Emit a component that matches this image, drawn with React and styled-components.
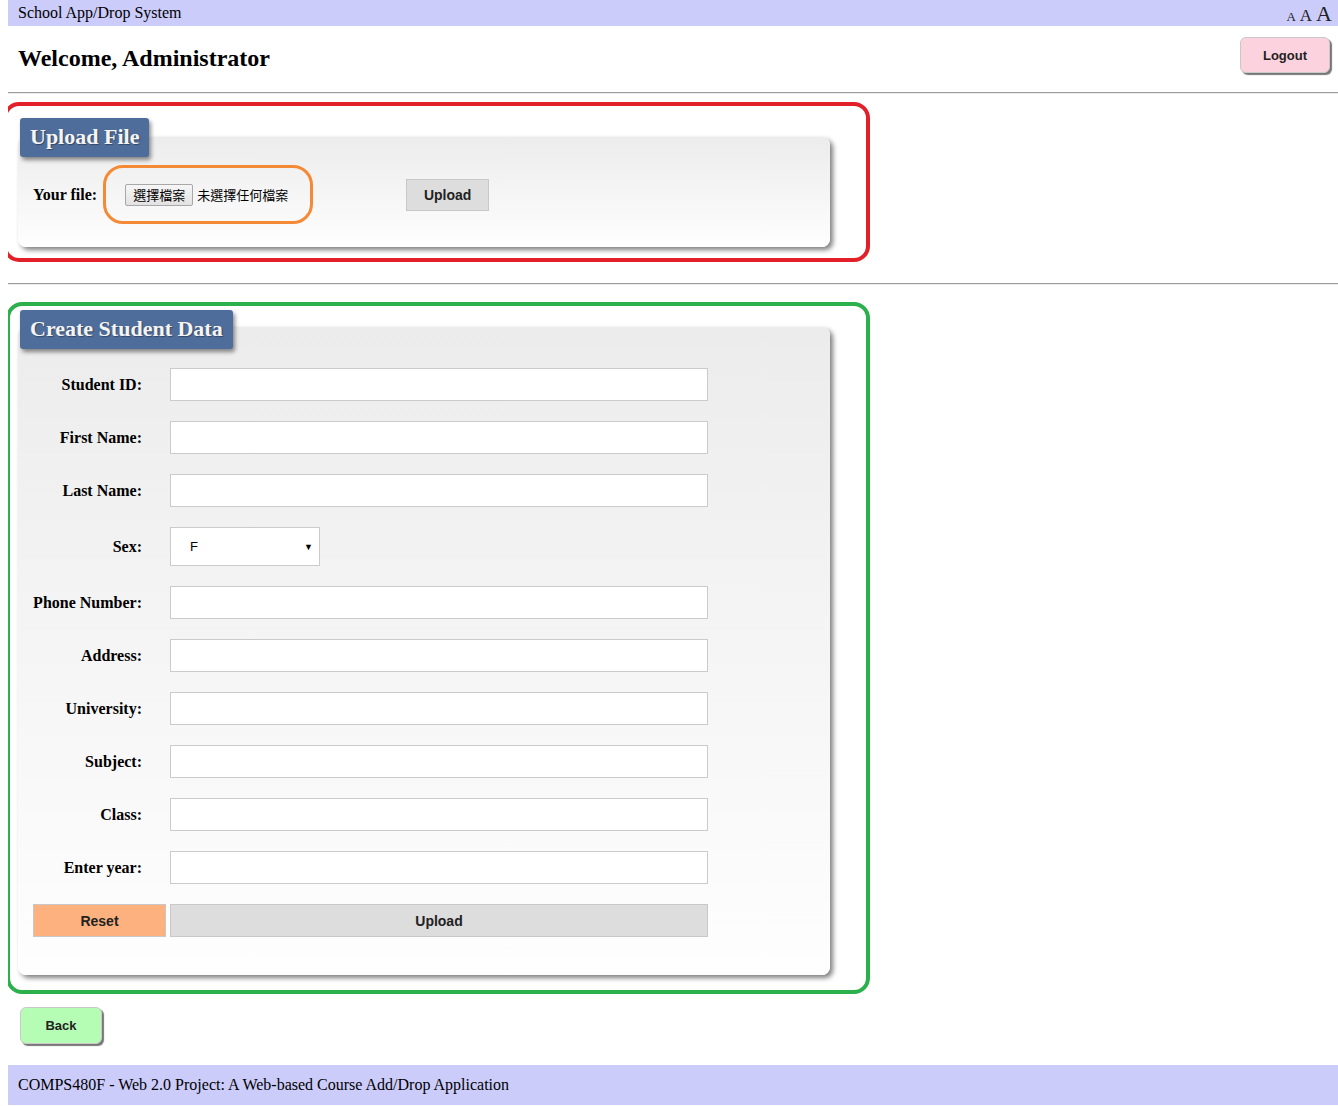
import React from "react";
import styled, { createGlobalStyle } from "styled-components";

const GlobalStyle = createGlobalStyle`
	body {
		margin: 0 0 0 8px;
		background: #fff;
		font-family: "Liberation Serif", "Times New Roman", serif;
		color: #000;
	}
`;

const TopBar = styled.div`
	height: 26px;
	background: #ccccfb;
	display: flex;
	align-items: center;
	justify-content: space-between;
	padding: 0 6px 0 10px;
	font-size: 16px;
`;

const SizeSwitch = styled.div`
	display: flex;
	align-items: baseline;
	gap: 4px;
	padding-top: 2px;
`;

const SizeLetter = styled.span`
	font-size: ${(p) => p.size}px;
	line-height: 1;
	color: #222;
`;

const HeaderRow = styled.div`
	display: flex;
	justify-content: space-between;
	align-items: flex-start;
	padding: 11px 8px 0 10px;
`;

const Welcome = styled.h1`
	margin: 7px 0 0;
	font-size: 24px;
	line-height: 28px;
	font-weight: bold;
`;

const RaisedButton = styled.button`
	width: ${(p) => p.w}px;
	height: ${(p) => p.h}px;
	background: ${(p) => p.bg};
	border: 1px solid #c9c9c9;
	border-radius: 6px;
	box-shadow: 2px 2px 1px #777;
	font-family: "Liberation Sans", Arial, sans-serif;
	font-weight: bold;
	font-size: 13px;
	color: #222;
	cursor: pointer;
`;

const Divider = styled.div`
	margin-top: ${(p) => p.top}px;
	border-top: 1px solid #9c9c9c;
	border-bottom: 1px solid #ececec;
`;

const Annotation = styled.div`
	box-sizing: border-box;
	width: ${(p) => p.w}px;
	margin-top: ${(p) => p.top}px;
	margin-left: ${(p) => p.shift}px;
	border: 4px solid ${(p) => p.color};
	border-radius: 16px;
	padding: ${(p) => p.pad};
`;

const TitleTab = styled.div`
	position: relative;
	z-index: 1;
	display: block;
	width: fit-content;
	margin: 0 0 -${(p) => p.overlap}px 2px;
	height: 39px;
	box-sizing: border-box;
	padding: 5px 10px 0;
	background: #4f6d9b;
	color: #f4f4f4;
	font-size: 22px;
	font-weight: bold;
	line-height: 28px;
	border-radius: 3px;
	box-shadow: 2px 3px 4px rgba(0, 0, 0, 0.45);
	text-shadow: 1px 1px 1px rgba(0, 0, 0, 0.35);
`;

const Panel = styled.div`
	width: 812px;
	box-sizing: border-box;
	padding: ${(p) => p.pad};
	border-radius: 8px;
	background: linear-gradient(to bottom, #ececec, #fefefe);
	box-shadow: 3px 3px 5px rgba(0, 0, 0, 0.5);
`;

const FileRow = styled.div`
	display: flex;
	align-items: center;
`;

const FieldLabel = styled.label`
	font-size: 16px;
	font-weight: bold;
	text-align: right;
`;

const Highlight = styled.div`
	box-sizing: border-box;
	width: 210px;
	height: 59px;
	margin-left: 6px;
	border: 3px solid #f58a36;
	border-radius: 20px;
	display: flex;
	align-items: center;
	padding-left: 19px;
	gap: 4px;
	font-family: "Noto Sans CJK TC", sans-serif;
	font-size: 13px;
`;

const ChooseButton = styled.span`
	height: 22px;
	box-sizing: border-box;
	padding: 0 7px;
	display: flex;
	align-items: center;
	background: linear-gradient(to bottom, #f6f6f6, #e2e2e2);
	border: 1px solid #a8a8a8;
	border-radius: 2px;
`;

const FlatButton = styled.button`
	width: ${(p) => p.w}px;
	height: ${(p) => p.h}px;
	margin-left: ${(p) => p.ml || 0}px;
	background: ${(p) => p.bg};
	border: 1px solid #c8c8c8;
	font-family: "Liberation Sans", Arial, sans-serif;
	font-weight: bold;
	font-size: 14px;
	color: #222;
	cursor: pointer;
`;

const FormGrid = styled.div`
	display: grid;
	grid-template-columns: 109px 538px;
	column-gap: 28px;
	row-gap: 20px;
	align-items: center;
`;

const TextInput = styled.input`
	box-sizing: border-box;
	height: 33px;
	border: 1px solid #cbcbcb;
	background: #fff;
	outline: none;
`;

const SelectBox = styled.div`
	box-sizing: border-box;
	width: 150px;
	height: 39px;
	border: 1px solid #cbcbcb;
	background: #fff;
	display: flex;
	align-items: center;
	justify-content: space-between;
	padding: 0 6px 0 19px;
	font-family: "Liberation Sans", Arial, sans-serif;
	font-size: 13px;
`;

const Caret = styled.span`
	font-size: 9px;
`;

const ButtonRow = styled.div`
	display: flex;
	gap: 4px;
	margin-top: 20px;
`;

const BackWrap = styled.div`
	margin: 13px 0 0 12px;
`;

const Footer = styled.div`
	margin-top: 21px;
	height: 40px;
	background: #ccccfb;
	display: flex;
	align-items: center;
	padding-left: 10px;
	font-size: 16px;
`;

const fields = [
	"Student ID:",
	"First Name:",
	"Last Name:",
	"Sex:",
	"Phone Number:",
	"Address:",
	"University:",
	"Subject:",
	"Class:",
	"Enter year:",
];

export default function App() {
	return (
		<>
			<GlobalStyle />
			<TopBar>
				<span>School App/Drop System</span>
				<SizeSwitch>
					<SizeLetter size={13}>A</SizeLetter>
					<SizeLetter size={17}>A</SizeLetter>
					<SizeLetter size={22}>A</SizeLetter>
				</SizeSwitch>
			</TopBar>

			<HeaderRow>
				<Welcome>Welcome, Administrator</Welcome>
				<RaisedButton w={90} h={36} bg="#fdd2df">
					Logout
				</RaisedButton>
			</HeaderRow>
			<Divider top={19} />

			<Annotation color="#e3202a" w={867} top={8} shift={-5} pad="12px 36px 11px 11px">
				<TitleTab overlap={20}>Upload File</TitleTab>
				<Panel pad="28px 15px 23px">
					<FileRow>
						<FieldLabel>Your file:</FieldLabel>
						<Highlight>
							<ChooseButton>選擇檔案</ChooseButton>
							<span>未選擇任何檔案</span>
						</Highlight>
						<FlatButton w={83} h={32} bg="#dddddd" ml={93}>
							Upload
						</FlatButton>
					</FileRow>
				</Panel>
			</Annotation>

			<Divider top={21} />

			<Annotation color="#2bb04b" w={864} top={17} shift={-2} pad="4px 36px 15px 8px">
				<TitleTab overlap={22}>Create Student Data</TitleTab>
				<Panel pad="41px 15px 38px">
					<FormGrid>
						{fields.map((f) => (
							<React.Fragment key={f}>
								<FieldLabel>{f}</FieldLabel>
								{f === "Sex:" ? (
									<SelectBox>
										<span>F</span>
										<Caret>▼</Caret>
									</SelectBox>
								) : (
									<TextInput type="text" />
								)}
							</React.Fragment>
						))}
					</FormGrid>
					<ButtonRow>
						<FlatButton w={133} h={33} bg="#fdb17e">
							Reset
						</FlatButton>
						<FlatButton w={538} h={33} bg="#dddddd">
							Upload
						</FlatButton>
					</ButtonRow>
				</Panel>
			</Annotation>

			<BackWrap>
				<RaisedButton w={82} h={37} bg="#b5fcb5">
					Back
				</RaisedButton>
			</BackWrap>

			<Footer>COMPS480F - Web 2.0 Project: A Web-based Course Add/Drop Application</Footer>
		</>
	);
}
